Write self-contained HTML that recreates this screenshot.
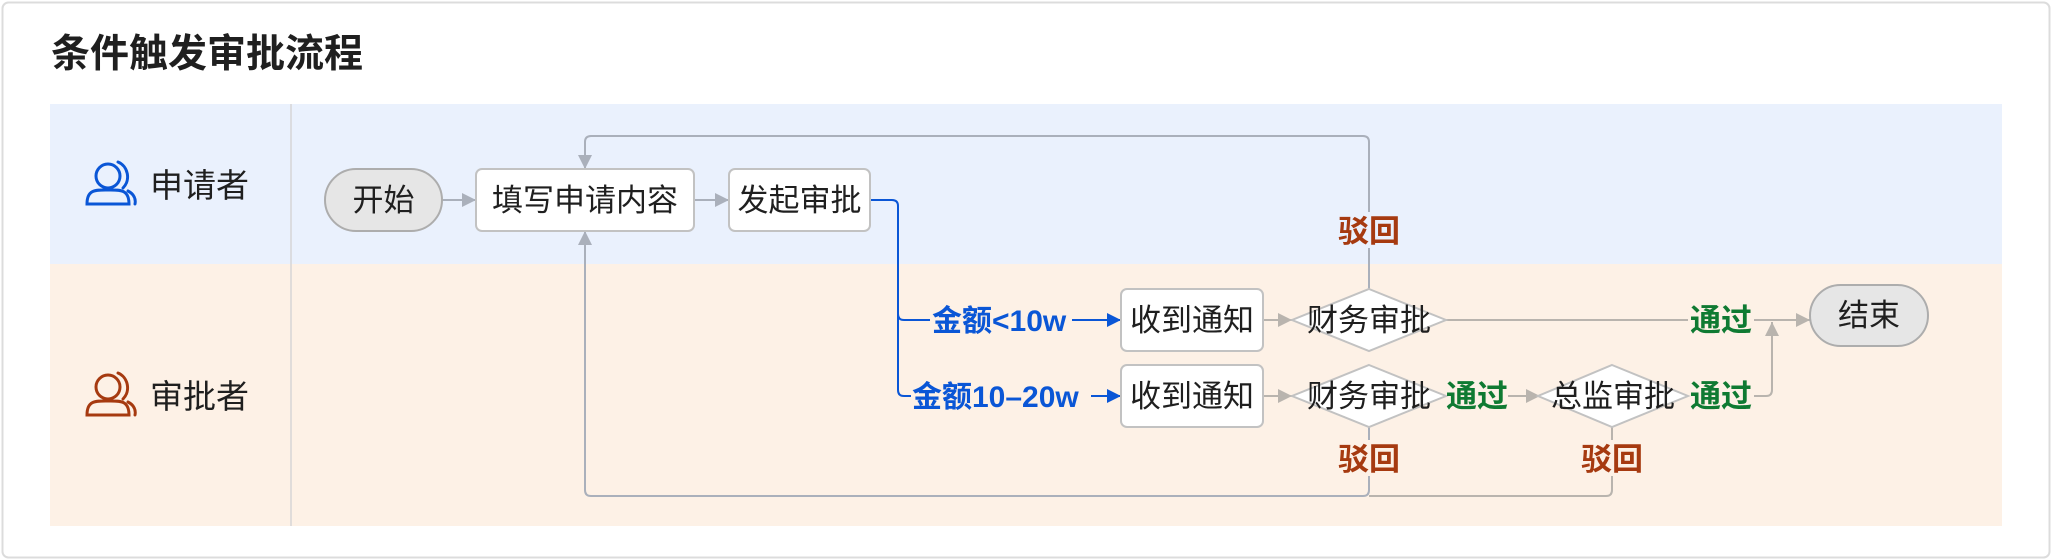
<!DOCTYPE html>
<html><head><meta charset="utf-8"><style>
html,body{margin:0;padding:0;background:#fff;width:2052px;height:560px;overflow:hidden}
svg{display:block}
text{font-family:"Liberation Sans","Noto Sans CJK SC",sans-serif}
</style></head><body>
<svg width="2052" height="560" viewBox="0 0 2052 560" xmlns="http://www.w3.org/2000/svg">
<defs>
<marker id="ag" viewBox="0 0 10 10" refX="10" refY="5" markerWidth="14" markerHeight="14" markerUnits="userSpaceOnUse" orient="auto"><path d="M0,0 L10,5 L0,10 z" fill="#b9b4ae"/></marker>
<marker id="ab" viewBox="0 0 10 10" refX="10" refY="5" markerWidth="14" markerHeight="14" markerUnits="userSpaceOnUse" orient="auto"><path d="M0,0 L10,5 L0,10 z" fill="#0a56d6"/></marker>
<marker id="ax" viewBox="0 0 10 10" refX="10" refY="5" markerWidth="14" markerHeight="14" markerUnits="userSpaceOnUse" orient="auto"><path d="M0,0 L10,5 L0,10 z" fill="#aab0bb"/></marker>
</defs>
<rect x="2.5" y="2.5" width="2047" height="555" rx="6" fill="#fff" stroke="#dcdcdc" stroke-width="2"/>
<text x="51" y="67" font-size="39" font-weight="bold" fill="#1f1f1f">条件触发审批流程</text>
<rect x="50" y="104" width="1952" height="160" fill="#eaf1fd"/>
<rect x="50" y="264" width="1952" height="262" fill="#fdf1e6"/>
<line x1="291" y1="104" x2="291" y2="526" stroke="#d6d6d6" stroke-width="1.5"/>
<!-- icons -->
<g fill="none" stroke="#0a56d6" stroke-width="3" stroke-linecap="round">
<circle cx="108" cy="176" r="12"/>
<path d="M87,204 C87,189 96,190 108,190 C120,190 129,189 129,204 Z"/>
<path d="M118,162 C128,166 131,180 123,188"/>
<path d="M128,191 C134,194 136,199 135,204"/>
</g>
<text x="150" y="197" font-size="33" fill="#1f1f1f">申请者</text>
<g fill="none" stroke="#a63a10" stroke-width="3" stroke-linecap="round">
<circle cx="108" cy="387" r="12"/>
<path d="M87,415 C87,400 96,401 108,401 C120,401 129,400 129,415 Z"/>
<path d="M118,373 C128,377 131,391 123,399"/>
<path d="M128,402 C134,405 136,410 135,415"/>
</g>
<text x="150" y="408" font-size="33" fill="#1f1f1f">审批者</text>
<!-- connectors -->
<g fill="none" stroke="#b9b4ae" stroke-width="2">
<line x1="442" y1="200" x2="476" y2="200" stroke="#aab0bb" marker-end="url(#ax)"/>
<line x1="694" y1="200" x2="729" y2="200" stroke="#aab0bb" marker-end="url(#ax)"/>
<path d="M1369,289 V142 Q1369,136 1363,136 H591 Q585,136 585,142 V169" stroke="#aab0bb" marker-end="url(#ax)"/>
<path d="M1369,427 V490 Q1369,496 1363,496 H591 Q585,496 585,490 V231" stroke="#aab0bb" marker-end="url(#ax)"/>
<path d="M1612,427 V490 Q1612,496 1606,496 H1369"/>
<line x1="1263" y1="320" x2="1292" y2="320" marker-end="url(#ag)"/>
<line x1="1263" y1="396" x2="1292" y2="396" marker-end="url(#ag)"/>
<line x1="1446" y1="320" x2="1810" y2="320" marker-end="url(#ag)"/>
<line x1="1508" y1="396" x2="1540" y2="396" marker-end="url(#ag)"/>
<path d="M1754,396 H1766 Q1772,396 1772,390 V322" marker-end="url(#ag)"/>
</g>
<g fill="none" stroke="#0a56d6" stroke-width="2">
<path d="M870,200 H892 Q898,200 898,206 V314 Q898,320 904,320 H930"/>
<path d="M898,300 V390 Q898,396 904,396 H911"/>
<line x1="1072" y1="320" x2="1121" y2="320" marker-end="url(#ab)"/>
<line x1="1091" y1="396" x2="1121" y2="396" marker-end="url(#ab)"/>
</g>
<!-- nodes -->
<rect x="325" y="169" width="117" height="62" rx="31" fill="#e6e6e6" stroke="#adadad" stroke-width="2"/>
<text x="383.5" y="211" font-size="31" text-anchor="middle" fill="#1f1f1f">开始</text>
<rect x="476" y="169" width="218" height="62" rx="6" fill="#fff" stroke="#c2c2c2" stroke-width="2"/>
<text x="585" y="211" font-size="31" text-anchor="middle" fill="#1f1f1f">填写申请内容</text>
<rect x="729" y="169" width="141" height="62" rx="6" fill="#fff" stroke="#c2c2c2" stroke-width="2"/>
<text x="799.5" y="211" font-size="31" text-anchor="middle" fill="#1f1f1f">发起审批</text>
<rect x="1121" y="289" width="142" height="62" rx="6" fill="#fff" stroke="#c2c2c2" stroke-width="2"/>
<text x="1192" y="331" font-size="31" text-anchor="middle" fill="#1f1f1f">收到通知</text>
<rect x="1121" y="365" width="142" height="62" rx="6" fill="#fff" stroke="#c2c2c2" stroke-width="2"/>
<text x="1192" y="407" font-size="31" text-anchor="middle" fill="#1f1f1f">收到通知</text>
<path d="M1369,289 L1446,320 L1369,351 L1292,320 Z" fill="#fff" stroke="#c2c2c2" stroke-width="2"/>
<text x="1369" y="331" font-size="31" text-anchor="middle" fill="#1f1f1f">财务审批</text>
<path d="M1369,365 L1446,396 L1369,427 L1292,396 Z" fill="#fff" stroke="#c2c2c2" stroke-width="2"/>
<text x="1369" y="407" font-size="31" text-anchor="middle" fill="#1f1f1f">财务审批</text>
<path d="M1612,365 L1688,396 L1612,427 L1538,396 Z" fill="#fff" stroke="#c2c2c2" stroke-width="2"/>
<text x="1613" y="407" font-size="31" text-anchor="middle" fill="#1f1f1f">总监审批</text>
<rect x="1810" y="285" width="118" height="61" rx="30.5" fill="#e6e6e6" stroke="#adadad" stroke-width="2"/>
<text x="1869" y="326" font-size="31" text-anchor="middle" fill="#1f1f1f">结束</text>
<!-- labels -->
<rect x="1336" y="212" width="66" height="36" fill="#eaf1fd"/>
<text x="1369" y="242" font-size="31" text-anchor="middle" fill="#a63a10" font-weight="bold">驳回</text>
<rect x="1336" y="440" width="66" height="36" fill="#fdf1e6"/>
<text x="1369" y="470" font-size="31" text-anchor="middle" fill="#a63a10" font-weight="bold">驳回</text>
<rect x="1579" y="440" width="66" height="36" fill="#fdf1e6"/>
<text x="1612" y="470" font-size="31" text-anchor="middle" fill="#a63a10" font-weight="bold">驳回</text>
<rect x="1688" y="302" width="66" height="36" fill="#fdf1e6"/>
<text x="1721" y="331" font-size="31" text-anchor="middle" fill="#0f7a32" font-weight="bold">通过</text>
<text x="1477" y="407" font-size="31" text-anchor="middle" fill="#0f7a32" font-weight="bold">通过</text>
<text x="1721" y="407" font-size="31" text-anchor="middle" fill="#0f7a32" font-weight="bold">通过</text>
<text x="932" y="331" font-size="30" fill="#0a56d6" font-weight="bold">金额&lt;10w</text>
<text x="912" y="407" font-size="30" fill="#0a56d6" font-weight="bold">金额10–20w</text>
</svg>
</body></html>
